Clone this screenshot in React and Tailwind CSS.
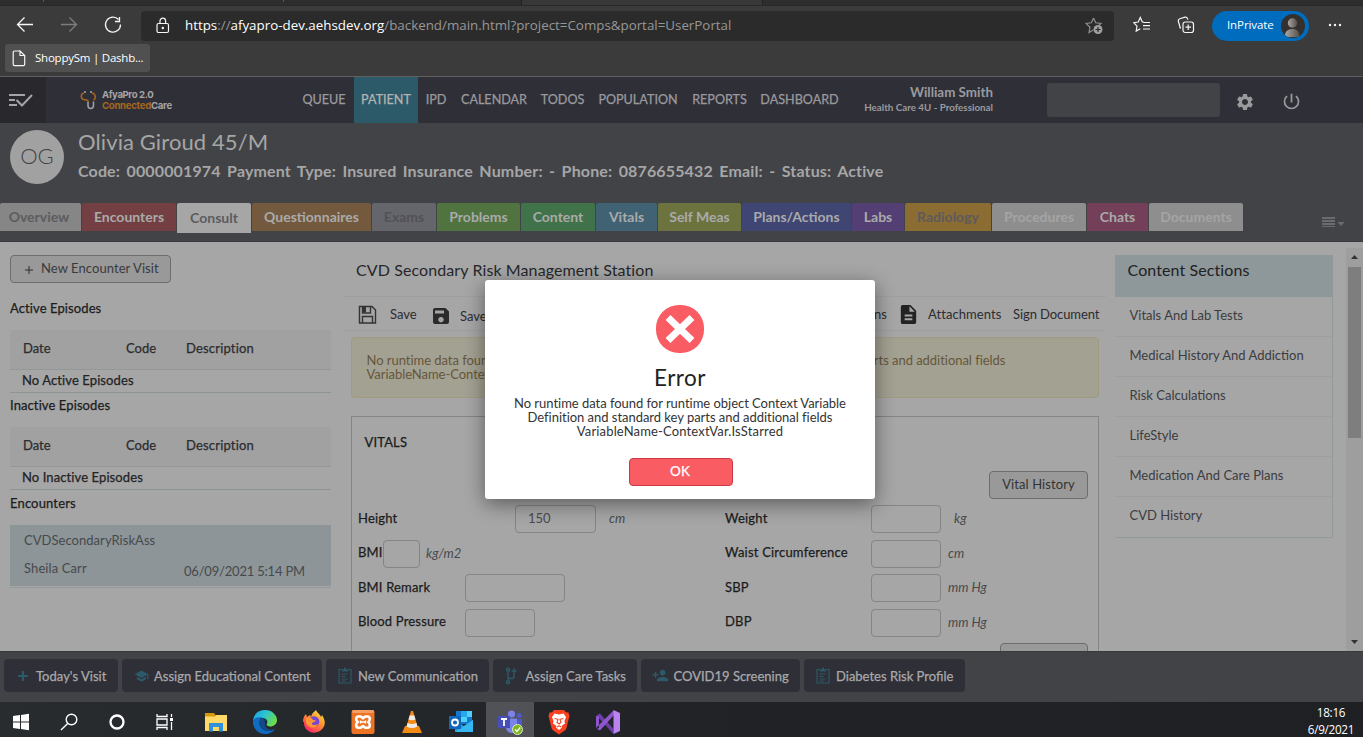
import React from "react";
import { MdSettings, MdPowerSettingsNew, MdDescription, MdSchool, MdPersonAdd } from "react-icons/md";

const SEGOE = "font-['Open_Sans',sans-serif]";
const MEDIUM = "[-webkit-text-stroke:0.25px_currentColor]";

function BrowserChrome() {
  return (
    <div className={`h-[77px] shrink-0 bg-[#3b3b3b] border-b border-[#606060] flex flex-col ${SEGOE}`}>
      <div className="h-[6px] shrink-0 bg-[#2d2d2d] border-b border-[#292929] flex">
        <div className="w-[44px] h-[2px] border-r border-[#555]" />
        <div className="w-[240px] h-[2px] border-r border-[#555]" />
        <div className="w-[238px] h-[5px] border-r border-[#222]" />
        <div className="w-[241px] h-[5px] bg-[#383838] border-r border-[#222]" />
      </div>
      <div className="h-[38px] shrink-0 flex items-center">
        <svg className="w-[141px] h-[38px] shrink-0" viewBox="0 0 141 38" fill="none" stroke="#f5f5f5" strokeWidth="1.3">
          <path d="M33 18.5H17.5M24.5 11.5l-7 7 7 7" />
          <path d="M61 18.5h15.500M69.500 11.500l7 7-7 7" stroke="#7d7d7d" />
          <path d="M118.500 13.500a7.500 7.500 0 1 0 2 5M119.500 11v4.500h-4.500" />
        </svg>
        <div className="w-[973px] h-[30px] mt-[1px] shrink-0 rounded-[4px] bg-[#2b2b2b] flex items-center">
          <svg className="ml-[14px] w-[16px] h-[18px]" viewBox="0 0 16 18" fill="none" stroke="#f5f5f5" strokeWidth="1.2">
            <rect x="2" y="6.500" width="11.500" height="9" rx="1.500" />
            <path d="M5 6.500V4a2.800 2.800 0 0 1 5.600 0v2.500" />
            <circle cx="7.800" cy="11" r=".6" fill="#f5f5f5" />
          </svg>
          <div className="ml-[14px] w-[880px] whitespace-nowrap text-[13.35px] text-[#979797]">
            <span className="text-white">https</span>://<span className="text-white">afyapro-dev.aehsdev.org</span>/backend/main.html?project=Comps&amp;portal=UserPortal
          </div>
          <svg className="ml-[20px] w-[20px] h-[20px] shrink-0" viewBox="0 0 20 20" fill="none" stroke="#8f8f8f" strokeWidth="1.200">
            <path d="M8.500 2l2.200 4.800 5.300.6-2 1.800M8.500 2L6.300 6.800 1 7.400l4 3.800-1 5.300 4.300-2.400" />
            <circle cx="13" cy="13.500" r="4.500" fill="#a0a0a0" stroke="none" />
            <path d="M13 11v5M10.500 13.500h5" stroke="#2b2b2b" />
          </svg>
        </div>
        <svg className="ml-[19px] w-[18px] h-[18px] shrink-0" viewBox="0 0 18 18" fill="none" stroke="#f5f5f5" strokeWidth="1.200">
          <path d="M11 6.500L9.200 5.800 7.300 1.500 5.200 6 .700 6.700l3.300 3.400-.800 5 4.100-2.300M11 6.500h6M10 9.700h7M10 13h7" />
        </svg>
        <svg className="ml-[26px] w-[18px] h-[18px] shrink-0" viewBox="0 0 18 18" fill="none" stroke="#f5f5f5" strokeWidth="1.200">
          <rect x="6" y="6" width="10.500" height="10.500" rx="2.200" />
          <path d="M11.200 8.500v5.500M8.500 11.200H14M3.500 12.500L1.300 5.300Q1 3.300 2.700 2.700L8 1.200q2-.3 2.500 1.500l.4 1M3.500 12.500l-1-1.500" />
        </svg>
        <div className="ml-[17px] w-[97px] h-[30px] mt-[1px] shrink-0 rounded-full bg-[#006cbe] flex items-center text-white text-[11.5px] tracking-[-0.1px]">
          <span className="ml-[15px] w-[54px] pb-[2px] whitespace-nowrap">InPrivate</span>
          <svg className="w-[24px] h-[24px]" viewBox="0 0 24 24">
            <defs>
              <linearGradient id="person" x1="0" x2="1"><stop offset="0" stopColor="#aaa6a1" /><stop offset="1" stopColor="#55504c" /></linearGradient>
              <clipPath id="face"><circle cx="12" cy="12" r="12" /></clipPath>
            </defs>
            <g clipPath="url(#face)"><rect width="24" height="24" fill="#34302e" /><circle cx="11.500" cy="9" r="4.700" fill="url(#person)" /><path d="M4 22c0-5 3-7 7.500-7s7 2.500 7 8H4z" fill="url(#person)" /></g>
          </svg>
        </div>
        <svg className="ml-[18px] w-[16px] h-[6px]" viewBox="0 0 16 6" fill="#f5f5f5"><circle cx="3" cy="3" r="1.200" /><circle cx="8" cy="3" r="1.200" /><circle cx="13" cy="3" r="1.200" /></svg>
      </div>
      <div className="ml-[5px] w-[145px] h-[28px] rounded-[3px] bg-[#505050] flex items-center text-white text-[11.5px]">
        <svg className="ml-[7px] w-[14px] h-[17px]" viewBox="0 0 14 17" fill="none" stroke="#f5f5f5" strokeWidth="1.200"><path d="M8 1H2.500Q1.200 1 1.200 2.300v12q0 1.300 1.300 1.300h9q1.200 0 1.200-1.300V5.500L8 1v4.500h4.500" /></svg>
        <span className="ml-[9px] whitespace-nowrap tracking-[-0.23px]">ShoppySm | Dashb...</span>
      </div>
    </div>
  );
}

const NAV = [
  ["QUEUE", "w-[60px]"], ["PATIENT", "w-[64px] bg-[#2d5a68] text-[#b3b3b3]"], ["IPD", "w-[36px]"], ["CALENDAR", "w-[80px]"],
  ["TODOS", "w-[57px]"], ["POPULATION", "w-[94px]"], ["REPORTS", "w-[69px]"], ["DASHBOARD", "w-[91px]"],
];

function TopNav() {
  return (
    <div className="h-[46px] shrink-0 bg-[#2f2f38] flex items-center text-[#9a9a9d]">
      <div className="w-[46px] h-full bg-[#28282d] flex items-center pl-[8px]">
        <svg className="w-[26px] h-[16px]" viewBox="0 0 26 16" fill="none" stroke="#a5a5a7" strokeWidth="2"><path d="M1 3h16M1 8h6M1 13h8M8.500 8l5.500 5.500L24 3" /></svg>
      </div>
      <svg className="ml-[34px] w-[18px] h-[20px]" viewBox="0 0 18 20" fill="none" strokeWidth="1.500">
        <path d="M4 3C.500 3.500.500 8.500 3.500 9.500c3 .5 4.500 0 5 2.500M12 3c4 .5 4 6 1.500 7" stroke="#a5671f" />
        <path d="M8 12v3.500q0 3 2.700 3t2.800-3V11.500M4 2h2M10 2h2" stroke="#a5a5a7" />
      </svg>
      <div className="ml-[4px] w-[192px] text-[9.6px] leading-[10px] font-bold font-['Inter',sans-serif] tracking-[-0.28px] text-[#a5a5a7] whitespace-nowrap">
        <div className="tracking-[-0.4px]">AfyaPro 2.0</div>
        <div className="mt-[1px]"><span className="text-[#a5671f]">Connected</span>Care</div>
      </div>
      <div className={`flex h-full text-[12.6px] ${MEDIUM}`}>
        {NAV.map(([n, c]) => <div key={n} className={`h-full flex items-center justify-center whitespace-nowrap ${c}`}>{n}</div>)}
      </div>
      <div className="w-[148px] text-right font-bold whitespace-nowrap">
        <div className="text-[13.4px] leading-[15px]">William Smith</div>
        <div className="text-[9.8px] leading-[15px]">Health Care 4U - Professional</div>
      </div>
      <div className="ml-[54px] w-[173px] h-[34px] rounded-[3px] bg-[#424347]" />
      <MdSettings className="ml-[15px] mt-[3px] w-[20px] h-[20px]" />
      <MdPowerSettingsNew className="ml-[26px] mt-[2px] w-[21px] h-[21px]" />
    </div>
  );
}

const TABS = [
  ["Overview", "w-[81px] h-[28px] pr-[3px] bg-[#868686] text-[#5c5c5f]"],
  ["Encounters", "w-[94px] h-[28px] bg-[#733f42] text-[#aaa]"],
  ["Consult", "w-[74px] h-[30px] bg-[#a6a6a6] text-[#5c5c5f]"],
  ["Questionnaires", "w-[119px] h-[28px] bg-[#735a3e] text-[#aaa]"],
  ["Exams", "w-[64px] h-[28px] bg-[#65656c] text-[#515157]"],
  ["Problems", "w-[83px] h-[28px] bg-[#50733f] text-[#aaa]"],
  ["Content", "w-[74px] h-[28px] bg-[#407349] text-[#aaa]"],
  ["Vitals", "w-[61px] h-[28px] bg-[#406273] text-[#aaa]"],
  ["Self Meas", "w-[83px] h-[28px] bg-[#6c733f] text-[#aaa]"],
  ["Plans/Actions", "w-[109px] h-[28px] bg-[#404673] text-[#aaa]"],
  ["Labs", "w-[52px] h-[28px] bg-[#533f73] text-[#aaa]"],
  ["Radiology", "w-[86px] h-[28px] bg-[#8b6c33] text-[#5d5a5c]"],
  ["Procedures", "w-[94px] h-[28px] bg-[#8e8e8e] text-[#a4a4a4]"],
  ["Chats", "w-[61px] h-[28px] bg-[#733f59] text-[#aaa]"],
  ["Documents", "w-[94px] h-[28px] bg-[#8e8e8e] text-[#a4a4a4]"],
];

function PatientHeader() {
  return (
    <div className="h-[119px] shrink-0 bg-[#424347] border-b border-[#393a3f] flex flex-col text-[#a6a6a6]">
      <div className="h-[80px] flex">
        <div className="ml-[10px] mt-[7px] w-[54px] h-[54px] shrink-0 rounded-full bg-[#a1a1a1] text-[#424347] text-[22px] font-light flex items-center justify-center pb-[3px]">OG</div>
        <div className="ml-[14px] whitespace-nowrap">
          <div className="mt-[5px] h-[28px] leading-[27px] text-[22px] tracking-[0.1px]">Olivia Giroud 45/M</div>
          <div className="mt-[4px] leading-[22px] text-[16px] font-bold tracking-[0.14px] [word-spacing:2.4px]">Code: 0000001974 Payment Type: Insured Insurance Number: - Phone: 0876655432 Email: - Status: Active</div>
        </div>
      </div>
      <div className="flex h-[30px] items-start gap-px">
        {TABS.map(([n, c]) => <div key={n} className={`shrink-0 rounded-t-[2px] flex items-center justify-center pb-[1px] text-[14px] font-bold whitespace-nowrap ${c}`}>{n}</div>)}
        <svg className="ml-[77px] mt-[14px] w-[26px] h-[12px]" viewBox="0 0 26 12" fill="#6b6c6f"><path d="M1 0h13v2H1zM1 3h13v2H1zM1 6h13v2H1zM1 9h13v1H1zM16.500 5h7L20 9z" /></svg>
      </div>
    </div>
  );
}

function Episodes({ title, empty, cls }) {
  return (
    <div className={`flex flex-col ${cls}`}>
      <div className={`text-[#1c1c1c] leading-[20px] tracking-[0.1px] ${MEDIUM}`}>{title}</div>
      <div className={`mt-[12px] h-[40px] bg-[#a1a1a1] border-b border-[#929798] flex items-center pb-[2px] text-[#2c2c2e] ${MEDIUM}`}>
        <span className="pl-[13px] w-[116px]">Date</span><span className="w-[60px]">Code</span><span className="tracking-[0.18px]">Description</span>
      </div>
      <div className={`h-[23px] border-b border-[#8d9496] pl-[12px] leading-[21px] tracking-[0.1px] text-[#232325] ${MEDIUM}`}>{empty}</div>
    </div>
  );
}

function LeftColumn() {
  return (
    <div className="ml-[10px] w-[321px] shrink-0 flex flex-col text-[13px]">
      <div className="mt-[13px] w-[161px] h-[28px] shrink-0 rounded-[4px] border border-[#6d6d6d] bg-[#999] flex items-center text-[13px] tracking-[0.07px] text-[#3a3a3d] whitespace-nowrap">
        <svg className="ml-[13px] mt-[2px] w-[10px] h-[10px]" viewBox="0 0 10 10" stroke="#2c2c2e"><path d="M5 1v8M1 5h8" /></svg>
        <span className="ml-[7px] pb-[1px]">New Encounter Visit</span>
      </div>
      <Episodes cls="mt-[15px]" title="Active Episodes" empty="No Active Episodes" />
      <Episodes cls="mt-[2px]" title="Inactive Episodes" empty="No Inactive Episodes" />
      <div className={`mt-[3px] text-[#1c1c1c] leading-[20px] tracking-[0.15px] ${MEDIUM}`}>Encounters</div>
      <div className="mt-[12px] h-[61px] shrink-0 bg-[#8d9598] shadow-[0_1px_0_#a6a6a6,0_2px_0_#959a9b] pl-[14px] text-[#47494c]">
        <div className="pt-[5px] leading-[20px] tracking-[0.04px]">CVDSecondaryRiskAss</div>
        <div className="mt-[8px] flex">
          <span className="w-[160px] leading-[20px] tracking-[0.1px]">Sheila Carr</span><span className="leading-[26px] whitespace-nowrap tracking-[-0.2px]">06/09/2021 5:14 PM</span>
        </div>
      </div>
    </div>
  );
}

const BOX = "h-[28px] shrink-0 rounded-[4px] border border-[#858585] flex items-center pl-[12px] text-[#4a4a4d]";
const ROWS = [
  ["Height", "w-[157px]", "w-[81px]", "150", "cm", "pl-[13px]", "Weight", "kg", "pl-[13px]", "pb-[1px]"],
  ["BMI", "w-[25px]", "w-[37px]", "", "kg/m2", "pl-[6px]", "Waist Circumference", "cm", "pl-[7px]", "pb-[2px]"],
  ["BMI Remark", "w-[107px]", "w-[100px]", "", "", "", "SBP", "mm Hg", "pl-[7px]", "pb-[1px]"],
  ["Blood Pressure", "w-[107px]", "w-[70px]", "", "", "", "DBP", "mm Hg", "pl-[7px]", "pb-[3px]"],
];

function MiddleColumn() {
  return (
    <div className="ml-[13px] w-[762px] h-[409px] shrink-0 flex flex-col overflow-hidden text-[13px] text-[#1c1c1c]">
      <div className="h-[55px] shrink-0 pl-[12px] pt-[17px] leading-[22px] text-[16px] text-[#26262a] border-b border-[#9f9f9f] tracking-[0.1px]">CVD Secondary Risk Management Station</div>
      <div className="h-[34px] shrink-0 flex items-center border-b border-[#9f9f9f] whitespace-nowrap text-[#2c2c30]">
        <svg className="ml-[14px] mt-[2px] w-[20px] h-[20px]" viewBox="0 0 20 20" fill="none" stroke="#333" strokeWidth="1.400"><path d="M1.500 1.500h12.500l3.500 3.500v13H1.500zM4.500 18v-6.500h10V18M4.500 1.500v6.500h8V1.500" /><path d="M5 2h3v5.500h-3z" fill="#333" stroke="none" /></svg>
        <span className="ml-[12px] mt-[2px] w-[42px]">Save</span>
        <svg className="mt-[5px] w-[18px] h-[18px]" viewBox="0 0 18 18"><path fill="#2b2b2b" fillRule="evenodd" d="M3 1h10.500L17 4.500V15q0 2-2 2H3q-2 0-2-2V3q0-2 2-2zm0 2.500v3h9v-3zM9 10a2.700 2.700 0 1 0 .01 0z" /></svg>
        <span className="ml-[10px] mt-[6px] w-[347px]">Save and Close</span>
        <span className="w-[80px] mt-[2px] text-right">Prescriptions</span>
        <MdDescription className="ml-[10px] mt-[2px] w-[23px] h-[23px] shrink-0 text-[#232323]" />
        <span className="ml-[8px] mt-[2px] w-[85px] tracking-[0.07px]">Attachments</span>
        <span className="mt-[2px] tracking-[-0.08px]">Sign Document</span>
      </div>
      <div className="ml-[7px] mt-[6px] w-[748px] h-[61px] shrink-0 rounded-[4px] border border-[#a19a82] bg-[#a3a192] pl-[14.5px] pt-[15px] leading-[14px] text-[#65563b] tracking-[-0.04px]">
        <div>No runtime data found for runtime object Context Variable Definition and standard key parts and additional fields</div>
        <div>VariableName-ContextVar.IsStarred</div>
      </div>
      <div className="ml-[7px] mt-[18px] w-[748px] h-[260px] shrink-0 border border-[#858585] pl-[6px] flex flex-col">
        <div className={`pl-[6.5px] mt-[15px] leading-[20px] tracking-[0.15px] ${MEDIUM}`}>VITALS</div>
        <div className="ml-[631px] mt-[19px] w-[99px] h-[28px] shrink-0 rounded-[4px] border border-[#6d6d6d] bg-[#999] text-[13px] tracking-[0.1px] text-[#333] flex items-center justify-center pb-[1px]">Vital History</div>
        <div className="mt-[6px] flex flex-col gap-[6.6px]">
          {ROWS.map((r) => (
            <div key={r[0]} className="h-[28px] flex whitespace-nowrap">
              <div className="w-[367px] flex items-center">
                <span className={`shrink-0 tracking-[0.18px] ${MEDIUM} ${r[1]} ${r[9]}`}>{r[0]}</span>
                <div className={`${BOX} ${r[2]}`}>{r[3]}</div>
                <span className={`italic text-[#47494c] ${r[5]}`}>{r[4]}</span>
              </div>
              <div className="flex items-center">
                <span className={`w-[146px] tracking-[0.2px] ${MEDIUM} ${r[9]}`}>{r[6]}</span>
                <div className={`${BOX} w-[70px]`} />
                <span className={`italic text-[#47494c] ${r[8]}`}>{r[7]}</span>
              </div>
            </div>
          ))}
        </div>
        <div className="ml-[642px] mt-[6px] w-[88px] h-[28px] shrink-0 rounded-[4px] border border-[#6d6d6d] bg-[#999]" />
      </div>
    </div>
  );
}

const SECTIONS = ["Vitals And Lab Tests", "Medical History And Addiction", "Risk Calculations", "LifeStyle", "Medication And Care Plans", "CVD History"];

function RightColumn() {
  return (
    <div className="ml-[9px] mt-[13px] w-[218px] h-[283px] shrink-0 border-r border-b border-[#929a9c] text-[13px] text-[#3b3c40] whitespace-nowrap">
      <div className="h-[42px] w-[218px] bg-[#8e9799] pl-[12.5px] pt-[4px] leading-[22px] text-[16px] text-[#1f2124] tracking-[0.1px]">Content Sections</div>
      {SECTIONS.map((s) => <div key={s} className="h-[40px] pl-[14.5px] leading-[37px] border-b border-[#9f9f9f] last:border-b-0">{s}</div>)}
    </div>
  );
}

function Scrollbar() {
  return (
    <div className="ml-[13px] mt-[6px] w-[17px] h-[403px] shrink-0 bg-[#9e9e9e] flex flex-col items-center">
      <svg className="w-[17px] h-[19px] shrink-0" viewBox="0 0 17 19"><path d="M5 11l3.500-4 3.500 4z" fill="#333" /></svg>
      <div className="w-[13px] h-[171px] bg-[#7e7e7e]" />
      <svg className="w-[17px] h-[17px] mt-auto" viewBox="0 0 17 17"><path d="M5 6l3.500 4L12 6z" fill="#333" /></svg>
    </div>
  );
}

const clip = <svg className="w-[14px] h-[17px]" viewBox="0 0 14 17" fill="none" stroke="currentColor" strokeWidth="1.100"><path d="M4 2.500H1v13.500h12V2.500h-3M3.500 7h6M3.500 9.500h4M3.500 12h6M3.500 14h4" /><path d="M4 4.500V2.500h1.500L7 0l1.500 2.500H10v2z" fill="currentColor" stroke="none" /></svg>;
const ACTIONS = [
  ["Today's Visit", "w-[114px] pl-[12px] gap-[6px] tracking-[0.02px]", <svg className="w-[14px] h-[12px]" viewBox="0 0 14 12" stroke="currentColor" strokeWidth="2.200"><path d="M7 1v10M2 6h10" /></svg>],
  ["Assign Educational Content", "w-[200px] pl-[12px] gap-[5px]", <MdSchool className="w-[15px] h-[16px]" />],
  ["New Communication", "w-[163px] pl-[12px] gap-[6px]", clip],
  ["Assign Care Tasks", "w-[144px] pl-[12px] gap-[7.5px]", <svg className="w-[13px] h-[18px]" viewBox="0 0 13 18" fill="none" stroke="currentColor" strokeWidth="1.500"><circle cx="3" cy="2.700" r="1.500" /><circle cx="3" cy="15.300" r="1.500" /><path d="M3 4.500v9M3 11.500h4q2 0 2-2V7M9 1v6M6.500 4h5" /></svg>],
  ["COVID19 Screening", "w-[159px] pl-[11px] gap-[4.5px]", <MdPersonAdd className="w-[17px] h-[17px]" />],
  ["Diabetes Risk Profile", "w-[161px] pl-[12px] gap-[6px]", clip],
];

function ActionBar() {
  return (
    <div className="h-[51px] shrink-0 bg-[#424347] border-t border-[#393a3f] flex pl-[4px] pt-[7px] gap-[4px]">
      {ACTIONS.map(([t, c, icon]) => (
        <div key={t} className={`h-[33px] rounded-[4px] bg-[#2f2f38] flex items-center text-[13px] text-[#a9a9aa] whitespace-nowrap ${c}`}>
          <span className="text-[#2d5a68] shrink-0">{icon}</span><span className={`pt-[2px] ${MEDIUM}`}>{t}</span>
        </div>
      ))}
    </div>
  );
}

const ICON = "w-[26px] h-[26px]";
const TASKS = [
  ["start", "w-[42px]", <svg className={ICON} viewBox="0 0 26 26" fill="#fff"><path d="M5 7l7-1v6.500H5zM13 6l8-1.200v7.700h-8zM5 13.500h7V20l-7-1zM13 13.500h8v7.700L13 20z" /></svg>],
  ["search", "w-[54px]", <svg className={ICON} viewBox="0 0 26 26" fill="none" stroke="#fff" strokeWidth="1.400"><circle cx="15.500" cy="10.500" r="5.300" /><path d="M11.700 14.500L5 21" /></svg>],
  ["cortana", "w-[42px]", <svg className={ICON} viewBox="0 0 26 26" fill="none" stroke="#fff" strokeWidth="2.300"><circle cx="13" cy="13" r="6.500" /></svg>],
  ["view", "w-[54px]", <svg className={ICON} viewBox="0 0 26 26" fill="none" stroke="#fff" strokeWidth="1.300"><path d="M5 5v2.500h10V5M5 10h10v6H5zM5 21v-2.500h10V21M19.500 5v3M19.500 13v8" /><path d="M18 9h3v3h-3z" fill="#fff" stroke="none" /></svg>],
  ["files", "w-[48px]", <svg className={ICON} viewBox="0 0 26 26"><path d="M2 4h9l1.500 2H24v16H2z" fill="#d9980c" /><path d="M2 7.500h10l1.500-1.500H24v16H2z" fill="#ffd867" /><path d="M6 22.500V14h14v8.500h-4V18h-6v4.500z" fill="#3191dc" /></svg>],
  ["edge", "w-[50px]", <svg className={ICON} viewBox="0 0 26 26"><defs><linearGradient id="edge" x1="0" y1="0" x2="1" y2=".5"><stop offset="0" stopColor="#1b9de2" /><stop offset=".5" stopColor="#2bc3d2" /><stop offset="1" stopColor="#6bdb4c" /></linearGradient></defs><path d="M1 12C2 4 7 1 13 1c7 0 12 5 12 10 0 4-3 6.500-7 6.500-3 0-4-1.500-3-3 1-2 0-5-4-5.500C6 8.500 2 10 1 12z" fill="url(#edge)" /><path d="M1 12c1-3 5-4.500 9-3.500-4 3-3.500 10 2 12.500 4 2 8 1 11-1-2 3.500-6 5-10 5C6 25 .500 19 1 12z" fill="#0f6cc0" /><path d="M10 8.500c-4 3-3.500 10 2 12.500 4 2 8 1 11-1-6 2-10-1-10-5 0-2.500 0-5.500-3-6.500z" fill="#114a8b" /></svg>],
  ["firefox", "w-[48px]", <svg className={ICON} viewBox="0 0 26 26"><defs><linearGradient id="fox" x1="1" y1="0" x2=".3" y2="1"><stop offset="0" stopColor="#fff04a" /><stop offset=".5" stopColor="#ff922d" /><stop offset="1" stopColor="#ff2468" /></linearGradient></defs><path d="M2 13c0-4 1-6 3-8l1 3 3-2 1 2c1-4 3-5 5-7 1 3 4 4 5 7l1-2c3 5 4 9 1 13-4 6-13 6-17 1-1.500-2-2-4-2-7z" fill="url(#fox)" /><circle cx="13" cy="12.500" r="5.300" fill="#7646d5" /><path d="M5 9c4-1 6 0 7 2l3 .5c-1 2-4 1.500-4 3 0 2 4 2 6 0-1 5-10 6-12-1z" fill="#ff9634" /></svg>],
  ["xampp", "w-[50px]", <svg className={ICON} viewBox="0 0 26 26"><rect x="1.500" y="1" width="23" height="24" rx="2" fill="#ee7425" /><rect x="2" y="1" width="22" height="3" rx="1.500" fill="#f59e63" /><path d="M8.500 7.500h2.200L13 9.300l2.300-1.800h2.200q2.300 0 2.300 2.500 0 2-1.600 3 1.600 1 1.600 3 0 2.800-2.300 2.800h-2.200L13 17l-2.300 1.800H8.500q-2.300 0-2.300-2.800 0-2 1.600-3-1.600-1-1.600-3 0-2.500 2.300-2.500z" fill="none" stroke="#fff" strokeWidth="2.600" strokeLinejoin="round" /><path d="M10.500 11.500v3M15.500 11.500v3M10.500 13h5" stroke="#fff" strokeWidth="1.500" /></svg>],
  ["vlc", "w-[48px]", <svg className={ICON} viewBox="0 0 26 26"><path d="M6 17h14l3 7H3z" fill="#f28c14" /><path d="M12 2h2l5 17q-6 3.500-12 0z" fill="#f58a18" /><path d="M10.700 6.500h4.600l1.200 4q-3.500 1.500-7 0zM8.500 14q4.500 2 9 0l.9 3.500q-5.400 3-10.800 0z" fill="#ececec" /></svg>],
  ["outlook", "w-[50px]", <svg className={ICON} viewBox="0 0 26 26"><path d="M8 2h16v13H8z" fill="#1479cc" /><path d="M13 2h6v6h-6z" fill="#28a8ea" /><path d="M19 2h5v6h-5zM13 8h6v5h-6z" fill="#50d0fa" /><path d="M7 11l9 6 9-6v12H7z" fill="#1d9de4" /><path d="M7 23l18-12v12z" fill="#35b8f1" /><path d="M1 7h12v13H1z" fill="#0f68bd" /><circle cx="7" cy="13.500" r="3" fill="none" stroke="#fff" strokeWidth="1.800" /></svg>],
  ["teams", "w-[48px] bg-[#515257]", <svg className={ICON} viewBox="0 0 26 26"><circle cx="14.500" cy="5" r="3.600" fill="#7b83eb" /><circle cx="22" cy="6.500" r="2.500" fill="#5059c9" /><path d="M17 10h8v7q-1 4-5 4h-3z" fill="#5059c9" /><path d="M9 9.500h11V18q-1 6-6 6-5-1-5-6z" fill="#7b83eb" /><path d="M1 7h12v12H1z" fill="#464eb8" /><path d="M4 10h6M7 10v7" stroke="#fff" strokeWidth="1.800" /><circle cx="20.500" cy="20.500" r="5" fill="#79b51c" stroke="#dceebc" /><path d="M18 20.500l2 2 3.200-4" fill="none" stroke="#fff" strokeWidth="1.500" /></svg>],
  ["brave", "w-[49px]", <svg className={ICON} viewBox="0 0 26 26"><path d="M8 1h10l2 2.200 2.500.3L23.500 7l-.7 2.500-2.300 9.500q-.5 2-2.500 3l-5 3.500-5-3.500q-2-1-2.500-3L3.200 9.500 2.500 7l1-3.500L6 3.200z" fill="#f9401f" /><path d="M13 5.500l4.500-1L20 8l-1.500 4 .5 2.500-3.500 2.500.5 1.500-3 2.500-3-2.500.5-1.500L7 14.500l.5-2.500L6 8l2.500-3.500z" fill="#fff" /><path d="M8.500 9.500l3.500.8-1 3 2 1.700 2-1.700-1-3 3.500-.8M11 18l2-1.200 2 1.200" fill="none" stroke="#f9401f" strokeWidth="1.100" /></svg>],
  ["vs", "w-[50px]", <svg className={ICON} viewBox="0 0 26 26"><path d="M2 6l3-1.500L18.500 20v5L2 7z" fill="#6b3fa8" /><path d="M2 20l3 1.500L19 6V1L1 19V7l3 .500v11z" fill="#8f55ce" /><path d="M18.500 1L25 4v18l-6.500 3z" fill="#b983f0" /></svg>],
];

function Taskbar() {
  return (
    <div className={`h-[35px] shrink-0 bg-[linear-gradient(90deg,#282c2f,#212327_50%,#1e2024)] flex text-white text-[12px] overflow-hidden ${SEGOE}`}>
      {TASKS.map(([n, c, icon]) => <div key={n} className={`h-[40px] flex justify-center pt-[7px] shrink-0 ${c}`}>{icon}</div>)}
      <div className="ml-auto w-[64px] text-center pt-[2px] text-[11.7px] tracking-[-0.3px]"><div className="leading-[17px]">18:16</div><div className="leading-[16px]">6/9/2021</div></div>
    </div>
  );
}

function ErrorDialog() {
  return (
    <div className="absolute left-[485px] top-[280px] w-[390px] h-[219px] rounded-[3px] bg-white shadow-[0_5px_20px_rgba(0,0,0,0.45)] flex flex-col items-center text-[#222]">
      <svg className="mt-[25px] w-[48px] h-[48px] shrink-0" viewBox="0 0 48 48"><rect width="48" height="48" rx="23" fill="#f95d63" /><path d="M12 12.500l24 23M36 12.500l-24 23" stroke="#fff" strokeWidth="7" /></svg>
      <div className="mt-[11px] h-[29px] leading-[28px] text-[22.5px] tracking-[0.45px]">Error</div>
      <div className="mt-[3px] text-center text-[13px] leading-[14px] text-[#333] whitespace-nowrap">
        <div className="tracking-[-0.03px]">No runtime data found for runtime object Context Variable</div>
        <div className="tracking-[-0.03px]">Definition and standard key parts and additional fields</div>
        <div className="tracking-[0.15px]">VariableName-ContextVar.IsStarred</div>
      </div>
      <div className={`ml-[2px] mt-[20px] w-[104px] h-[28px] shrink-0 rounded-[4px] border border-[#c93a45] bg-[#f95d63] text-white text-[13.5px] flex items-center justify-center pb-[1px] pr-[2px] ${MEDIUM}`}>OK</div>
    </div>
  );
}

export default function App() {
  return (
    <div className="relative w-[1363px] h-[737px] overflow-hidden flex flex-col bg-[#a6a6a6] font-['Lato',sans-serif]">
      <BrowserChrome />
      <TopNav />
      <PatientHeader />
      <div className="h-[409px] shrink-0 flex items-start overflow-hidden">
        <LeftColumn />
        <MiddleColumn />
        <RightColumn />
        <Scrollbar />
      </div>
      <ActionBar />
      <Taskbar />
      <ErrorDialog />
    </div>
  );
}
